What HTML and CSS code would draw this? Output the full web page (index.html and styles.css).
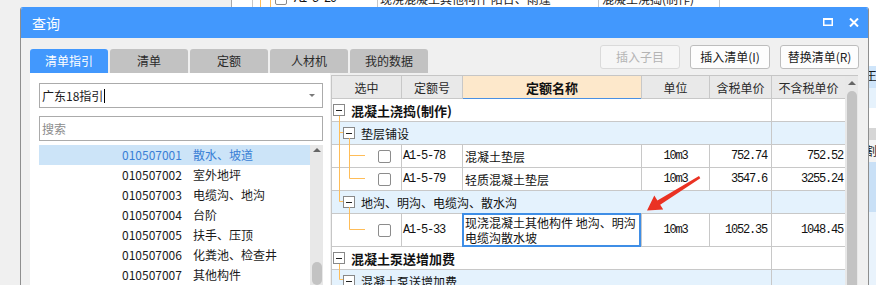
FILE: index.html
```html
<!DOCTYPE html>
<html lang="zh">
<head>
<meta charset="utf-8">
<title>查询</title>
<link rel="stylesheet" href="styles.css">
</head>
<body>
<div class="desk">
  <div class="bgapp">
    <div class="bg-left"></div>
    <div class="bg-main">
      <div class="bg-row">
        <span class="bgc w21"></span>
        <span class="bgc w8 orange"></span>
        <span class="bgc w10 orange"></span>
        <span class="bgc w107"><span class="bg-chk"></span><span class="mono">A1-5-29</span></span>
        <span class="bgc w221">现浇混凝土其他构件 阳台、雨篷</span>
        <span class="bgc w121">混凝土浇捣(制作)</span>
        <span class="bgc wrest"></span>
      </div>
    </div>
    <div class="bg-side">
      <div class="bs b1"></div>
      <div class="bs b2">王</div>
      <div class="bs b3"></div>
      <div class="bs b4"></div>
      <div class="bs b5"></div>
      <div class="bs b6">割</div>
      <div class="bs b7"></div>
      <div class="bs b8"></div>
    </div>
  </div>

  <div class="dialog">
    <div class="titlebar">
      <span class="title">查询</span>
      <span class="tb-icons">
        <svg class="ic-max" width="10" height="8" viewBox="0 0 10 8"><rect x="0.75" y="1" width="8.5" height="6.25" fill="none" stroke="#fff" stroke-width="1.5"/><rect x="0" y="0" width="10" height="2" fill="#fff"/></svg>
        <svg class="ic-close" width="10" height="9" viewBox="0 0 10 9"><path d="M1 0.5 L9 8.5 M9 0.5 L1 8.5" stroke="#fff" stroke-width="2"/></svg>
      </span>
    </div>
    <div class="dbody">
      <div class="toolbar">
        <div class="tabs">
          <span class="tab active">清单指引</span>
          <span class="tab">清单</span>
          <span class="tab">定额</span>
          <span class="tab">人材机</span>
          <span class="tab">我的数据</span>
        </div>
        <div class="btns">
          <span class="btn disabled">插入子目</span>
          <span class="btn">插入清单(I)</span>
          <span class="btn">替换清单(R)</span>
        </div>
      </div>
      <div class="content">
        <div class="leftp">
          <div class="combo"><span class="combo-text">广东18指引</span><span class="caret"></span><span class="drop"></span></div>
          <div class="search">搜索</div>
          <div class="list">
            <div class="list-rows">
              <div class="li sel"><span>010507001</span><span>散水、坡道</span></div>
              <div class="li"><span>010507002</span><span>室外地坪</span></div>
              <div class="li"><span>010507003</span><span>电缆沟、地沟</span></div>
              <div class="li"><span>010507004</span><span>台阶</span></div>
              <div class="li"><span>010507005</span><span>扶手、压顶</span></div>
              <div class="li"><span>010507006</span><span>化粪池、检查井</span></div>
              <div class="li"><span>010507007</span><span>其他构件</span></div>
            </div>
            <div class="vscroll small">
              <span class="up"></span>
              <span class="thumb lthumb"></span>
            </div>
          </div>
        </div>

        <div class="grid">
          <div class="table">
            <div class="row head">
              <span class="c">选中</span>
              <span class="c">定额号</span>
              <span class="c hl">定额名称</span>
              <span class="c">单位</span>
              <span class="c">含税单价</span>
              <span class="c last">不含税单价</span>
            </div>
            <div class="row grp">
              <span class="c g"><span class="exp e0"></span><b class="gt">混凝土浇捣(制作)</b></span>
              <span class="c last"></span>
            </div>
            <div class="row grp blue">
              <span class="c g"><span class="exp e1"></span><span class="st">垫层铺设</span></span>
              <span class="c last"></span>
            </div>
            <div class="row">
              <span class="c chkc"><span class="chk"></span></span>
              <span class="c mono code">A1-5-78</span>
              <span class="c name">混凝土垫层</span>
              <span class="c mono ctr">10m3</span>
              <span class="c mono num">752.74</span>
              <span class="c mono num last">752.52</span>
            </div>
            <div class="row">
              <span class="c chkc"><span class="chk"></span></span>
              <span class="c mono code">A1-5-79</span>
              <span class="c name">轻质混凝土垫层</span>
              <span class="c mono ctr">10m3</span>
              <span class="c mono num">3547.6</span>
              <span class="c mono num last">3255.24</span>
            </div>
            <div class="row grp blue">
              <span class="c g"><span class="exp e1"></span><span class="st">地沟、明沟、电缆沟、散水沟</span></span>
              <span class="c last"></span>
            </div>
            <div class="row tall">
              <span class="c chkc"><span class="chk"></span></span>
              <span class="c mono code">A1-5-33</span>
              <span class="c name focus"><span class="fl">现浇混凝土其他构件 地沟、明沟</span><span class="fl">电缆沟散水坡</span></span>
              <span class="c mono ctr">10m3</span>
              <span class="c mono num">1052.35</span>
              <span class="c mono num last">1048.45</span>
            </div>
            <div class="row grp">
              <span class="c g"><span class="exp e0"></span><b class="gt">混凝土泵送增加费</b></span>
              <span class="c last"></span>
            </div>
            <div class="row grp blue">
              <span class="c g"><span class="exp e1"></span><span class="st">混凝土泵送增加费</span></span>
              <span class="c last"></span>
            </div>
          </div>
          <div class="vscroll big">
            <span class="up"></span>
            <span class="thumb gthumb"></span>
          </div>
        </div>
      </div>
    </div>
  </div>

  <svg class="overlay" width="876" height="285" viewBox="0 0 876 285">
    <g stroke="#ffbd58" stroke-width="1" fill="none">
      <path d="M339.5 116 V201.5 H343"/>
      <path d="M339.5 132.5 H343"/>
      <path d="M349.5 138 V178.5 H365"/>
      <path d="M349.5 155.5 H365"/>
      <path d="M349.5 207 V229.5 H365"/>
      <path d="M339.5 264 V279.5 H343"/>
    </g>
    <polygon points="699,176 700.3,178.2 660.2,204.8 663.2,209.4 647,210.5 654.3,195.6 657.4,200.4" fill="#ea3223"/>
  </svg>
</div>
</body>
</html>
```

FILE: styles.css
```css
* { box-sizing: border-box; }
html, body { margin: 0; padding: 0; }
body {
  font-family: "Noto Sans CJK SC", "Noto Sans", sans-serif;
  font-size: 12px;
  color: #1a1a1a;
}
.desk {
  position: relative;
  width: 876px;
  height: 285px;
  overflow: hidden;
  background: #f0f0f0;
}

/* background application */
.bgapp {
  display: grid;
  grid-template-columns: 232px 637px 7px;
  height: 285px;
}
.bg-left { background: #f0f0f0; border-right: 1px solid #a9a9a9; }
.bg-main { background: #fff; overflow: hidden; }
.bg-row {
  display: flex;
  height: 22px;
  margin-top: -12px;
  line-height: 22px;
  white-space: nowrap;
}
.bgc { height: 22px; border-right: 1px solid #c8c8c8; flex: none; overflow: hidden; display: flex; align-items: center; }
.bgc.orange { border-right-color: #ffbd58; }
.w21 { width: 21px; }
.w8 { width: 8px; }
.w10 { width: 10px; }
.w107 { width: 107px; padding-left: 4px; gap: 7px; }
.w221 { width: 221px; padding-left: 2px; }
.w121 { width: 121px; padding-left: 3px; }
.wrest { flex: 1; border-right: none; }
.bg-chk { width: 12px; height: 12px; border: 1px solid #8a8a8a; border-radius: 2px; background: #fff; }
.bg-side { display: flex; flex-direction: column; overflow: hidden; }
.bs { flex: none; overflow: hidden; font-size: 12px; line-height: 20px; text-indent: -4px; }
.b1 { height: 66px; background: #fff; }
.b2 { height: 22px; background: #cfe5fa; }
.b3 { height: 20px; background: #e6f2fc; }
.b4 { height: 20px; background: #fff; }
.b5 { height: 12px; background: #d6d6d6; }
.b6 { height: 22px; background: #f4f4f4; line-height: 22px; }
.b7 { height: 50px; background: #c9e0f6; }
.b8 { height: 80px; background: #e9f3fc; }

/* dialog window */
.dialog {
  position: absolute;
  left: 20px;
  top: 7px;
  width: 849px;
  height: 300px;
  border: 1px solid #8e8e8e;
  border-top-color: #4298fd;
  border-radius: 3px 3px 0 0;
  background: #f0f0f0;
  overflow: hidden;
}
.titlebar {
  height: 30px;
  background: #4298fd;
  display: flex;
  align-items: center;
  justify-content: space-between;
  padding: 0 9px 0 11px;
}
.title { color: #fff; font-size: 14px; line-height: 30px; }
.tb-icons { display: flex; align-items: center; gap: 16px; padding-bottom: 2px; }
.ic-max, .ic-close { display: block; }

.toolbar {
  display: flex;
  justify-content: space-between;
  height: 35px;
  padding: 0 9px;
}
.tabs { display: flex; gap: 2px; align-self: flex-end; }
.tab {
  width: 78px;
  height: 24px;
  line-height: 24px;
  text-align: center;
  background: #c2c2c2;
  color: #2a2a2a;
  border-radius: 3px 3px 0 0;
  font-size: 12px;
}
.tab.active { background: #4298fd; color: #fff; }
.btns { display: flex; gap: 10px; margin-top: 7px; }
.btn {
  width: 80px;
  height: 24px;
  line-height: 22px;
  text-align: center;
  border: 1px solid #bdbdbd;
  border-radius: 3px;
  background: #fdfdfd;
  color: #1a1a1a;
}
.btn:last-child { width: 79px; }
.btn.disabled { border-color: #dadada; color: #b4b4b4; background: #f6f6f6; }

.content { display: flex; padding: 0 10px 0 9px; height: 220px; }

/* left panel */
.leftp {
  width: 300px;
  background: #fff;
  padding: 10px 7px 0 9px;
}
.combo {
  height: 25px;
  border: 1px solid #ababab;
  display: flex;
  align-items: center;
  padding-left: 2px;
  position: relative;
}
.combo-text { line-height: 23px; }
.caret { width: 1px; height: 14px; background: #000; margin-left: 1px; }
.drop {
  margin-left: auto;
  margin-right: 7px;
  width: 0; height: 0;
  border-left: 3px solid transparent;
  border-right: 3px solid transparent;
  border-top: 3px solid #7a7a7a;
}
.search {
  margin-top: 8px;
  height: 25px;
  border: 1px solid #ababab;
  line-height: 23px;
  padding-left: 2px;
  color: #8c8c8c;
}
.list { margin-top: 4px; display: flex; height: 140px; }
.list-rows { flex: 1; }
.li {
  display: grid;
  grid-template-columns: 71px auto;
  height: 20px;
  line-height: 20px;
  padding-left: 83px;
  color: #1a1a1a;
}
.li.sel { background: #cce4f8; color: #3a7fd5; }

.vscroll { background: #e8e8e8; display: flex; flex-direction: column; align-items: center; flex: none; }
.vscroll.small { width: 13px; }
.vscroll .up {
  width: 0; height: 0;
  border-left: 4px solid transparent;
  border-right: 4px solid transparent;
  border-bottom: 4px solid #666;
}
.small .up { margin-top: 3px; }
.lthumb { width: 10px; height: 40px; margin-top: 110px; background: #c3c3c3; border-radius: 5px; }

/* grid */
.grid {
  display: flex;
  margin: 2px 0 0 1px;
  border-left: 1px solid #c6c6c6;
  border-top: 1px solid #c6c6c6;
  background: #fff;
}
.table { width: 513px; }
.row {
  display: grid;
  grid-template-columns: 70px 61px 179px 68px 62px 73px;
  height: 23px;
  border-bottom: 1px solid #c8c8c8;
}
.row.tall { height: 33px; }
.row.grp { grid-template-columns: 440px 73px; }
.row.blue { background: #e4f2fd; }
.c {
  border-right: 1px solid #c8c8c8;
  display: flex;
  align-items: center;
  overflow: visible;
  white-space: nowrap;
  position: relative;
}
.c.last { border-right: none; }
.head { background: #e9e9e9; height: 23px; border-bottom-color: #c8c8c8; }
.head .c { justify-content: center; color: #2a2a2a; }
.head .c.hl {
  background: #fde8cb;
  font-weight: bold;
  font-size: 13px;
  color: #111;
  box-shadow: inset 0 -1px 0 #4a90e2;
  margin-bottom: -1px;
}
.mono {
  font-family: "Liberation Mono", "DejaVu Sans Mono", monospace;
  font-size: 12px;
  letter-spacing: -1.2px;
  color: #111;
}
.code { padding-left: 1px; }
.name { padding-left: 2px; color: #111; }
.ctr { justify-content: center; }
.num { justify-content: flex-end; padding-right: 4px; }
.num.last { padding-right: 2px; }
.chkc { padding-left: 46px; }
.chk {
  width: 13px; height: 13px;
  border: 1px solid #8c8c8c;
  border-radius: 2px;
  background: #fff;
}
.g { color: #111; }
.exp {
  width: 12px; height: 12px;
  border: 1px solid #888;
  background: #fff;
  position: relative;
  flex: none;
}
.exp::after {
  content: "";
  position: absolute;
  left: 2px; right: 2px; top: 4.5px;
  height: 1px;
  background: #222;
}
.e0 { margin-left: 1px; }
.e1 { margin-left: 11px; }
.gt { margin-left: 6px; font-size: 13px; font-weight: bold; }
.st { margin-left: 6px; }
.focus { flex-direction: column; align-items: flex-start; justify-content: center; }
.fl { display: block; height: 15px; line-height: 15px; }
.focus::after {
  content: "";
  position: absolute;
  top: -1px; left: -1px; right: 0; bottom: -1px;
  border: 2px solid #3f8ee6;
}
.vscroll.big { width: 13px; }
.big .up { margin-top: 5px; }
.gthumb { width: 10px; flex: 1; margin-top: 6px; background: #c3c3c3; border-radius: 5px 5px 0 0; }

.overlay { position: absolute; left: 0; top: 0; pointer-events: none; }
```
